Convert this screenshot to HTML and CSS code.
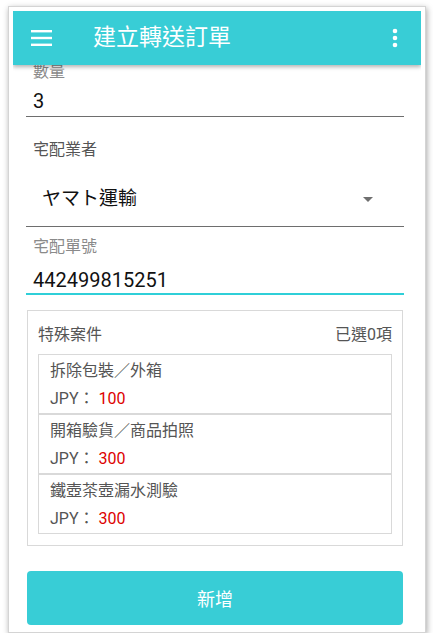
FILE: index.html
```html
<!DOCTYPE html>
<html lang="zh-Hant">
<head>
    <meta charset="UTF-8">
    <meta name="viewport" content="width=device-width, initial-scale=1.0">
    <title>建立轉送訂單</title>
    <link rel="stylesheet" href="styles.css">
</head>
<body>

    <div class="frame">
        <div class="screen">
            <div class="appbar">
                <svg class="menu-icon" width="21" height="16" viewBox="0 0 21 16">
                    <rect x="0" y="0" width="21" height="2.4" fill="#fff"/>
                    <rect x="0" y="6.8" width="21" height="2.4" fill="#fff"/>
                    <rect x="0" y="13.6" width="21" height="2.4" fill="#fff"/>
                </svg>
                <div class="appbar-title">建立轉送訂單</div>
                <svg class="more-icon" width="6" height="20" viewBox="0 0 6 20">
                    <circle cx="3" cy="3" r="2.3" fill="#fff"/>
                    <circle cx="3" cy="10" r="2.3" fill="#fff"/>
                    <circle cx="3" cy="17" r="2.3" fill="#fff"/>
                </svg>
            </div>

            <div class="content">
                <div class="field qty">
                    <div class="label light">數量</div>
                    <div class="value">3</div>
                </div>

                <div class="field carrier">
                    <div class="label">宅配業者</div>
                    <div class="select">
                        <span>ヤマト運輸</span>
                        <span class="arrow"></span>
                    </div>
                </div>

                <div class="field tracking">
                    <div class="label light">宅配單號</div>
                    <div class="value">442499815251</div>
                </div>

                <div class="special">
                    <div class="special-head">
                        <span>特殊案件</span>
                        <span>已選0項</span>
                    </div>
                    <div class="item">
                        <div class="item-name">拆除包裝／外箱</div>
                        <div class="item-price">JPY： <span class="price">100</span></div>
                    </div>
                    <div class="item">
                        <div class="item-name">開箱驗貨／商品拍照</div>
                        <div class="item-price">JPY： <span class="price">300</span></div>
                    </div>
                    <div class="item">
                        <div class="item-name">鐵壺茶壺漏水測驗</div>
                        <div class="item-price">JPY： <span class="price">300</span></div>
                    </div>
                </div>

                <div class="button">新增</div>
            </div>
        </div>
    </div>

</body>
</html>
```

FILE: styles.css
```css
body {
    margin: 0;
    background-color: #ffffff;
    font-family: Roboto, "Noto Sans CJK TC", sans-serif;
}
.frame {
    width: 408px;
    height: 617px;
    margin: 6px 0 0 8px;
    padding: 4px;
    background-color: #ffffff;
    border: 1px solid #d4d4d4;
    box-shadow: 1px 2px 6px rgba(0, 0, 0, 0.35);
}
.screen {
    height: 617px;
    overflow: hidden;
    background-color: #ffffff;
}
.appbar {
    position: relative;
    z-index: 1;
    height: 54px;
    display: flex;
    align-items: center;
    padding: 0 23px 0 18px;
    background-color: #38cdd6;
    box-shadow: 0 2px 4px rgba(0, 0, 0, 0.3);
}
.menu-icon {
    flex-shrink: 0;
}
.appbar-title {
    flex: 1;
    margin-left: 41px;
    color: #ffffff;
    font-size: 23px;
    line-height: 30px;
    margin-top: -1px;
}
.content {
    margin-top: -3px;
    padding: 0 17px 0 13px;
}
.label {
    padding-left: 7px;
    font-size: 16px;
    line-height: 20px;
    color: #555555;
}
.label.light {
    color: #8a8a8a;
}
.value {
    padding-left: 7px;
    font-size: 20px;
    line-height: 24px;
    color: #111111;
}
.qty .value {
    margin-top: 7px;
    padding-bottom: 3px;
    border-bottom: 1px solid #6e6e6e;
}
.carrier {
    margin-top: 23px;
}
.select {
    display: flex;
    align-items: center;
    justify-content: space-between;
    margin-top: 27px;
    padding: 0 31px 15px 16px;
    font-size: 19px;
    line-height: 24px;
    color: #111111;
    border-bottom: 1px solid #6e6e6e;
}
.arrow {
    width: 0;
    height: 0;
    border-left: 5px solid transparent;
    border-right: 5px solid transparent;
    border-top: 5px solid #6f6f6f;
}
.tracking {
    margin-top: 10px;
}
.tracking .value {
    margin-top: 11px;
    padding-bottom: 1px;
    border-bottom: 2px solid #2fcfd8;
}
.special {
    margin: 15px 1px 0 1px;
    padding: 0 10px 11px 10px;
    border: 1px solid #d9d9d9;
}
.special-head {
    height: 43px;
    display: flex;
    align-items: center;
    justify-content: space-between;
    font-size: 16px;
    color: #555555;
}
.item {
    height: 58px;
    padding-left: 11px;
    border: 1px solid #d9d9d9;
    color: #555555;
    font-size: 16px;
}
.item-name {
    margin-top: 6px;
    line-height: 20px;
}
.item-price {
    margin-top: 8px;
    line-height: 20px;
}
.price {
    color: #dd0000;
}
.button {
    margin: 25px 1px 0 1px;
    height: 54px;
    display: flex;
    align-items: center;
    justify-content: center;
    background-color: #38cdd6;
    border-radius: 4px;
    color: #ffffff;
    font-size: 18px;
}
```
